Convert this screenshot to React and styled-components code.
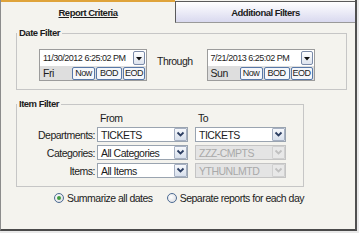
import styled, { createGlobalStyle } from "styled-components";

const GlobalStyle = createGlobalStyle`
  body {
    margin: 0;
    background: #e9e9e9;
    font-family: "Liberation Sans", Arial, sans-serif;
  }
`;

const Frame = styled.div`
  width: 354px;
  height: 229px;
  border-left: 1px solid #8c8c8c;
  border-right: 2px solid #505050;
  border-bottom: 2px solid #4a4a4a;
  background: #f4f3ee;
  color: #1c1c1c;
  font-size: 10.5px;
  letter-spacing: -0.5px;
`;

const TabBar = styled.div`
  display: flex;
  height: 23px;
`;

const ActiveTab = styled.div`
  align-items: center;
  border-top: 2px solid #dfa33a;
  box-sizing: border-box;
  display: flex;
  font-size: 9.5px;
  font-weight: bold;
  justify-content: center;
  text-decoration: underline;
  width: 174px;
`;

const InactiveTab = styled.div`
  align-items: center;
  background: linear-gradient(#ffffff, #d9d9ef);
  border: 1px solid #5a5a5a;
  border-bottom-color: #9a9a9a;
  border-right: none;
  box-sizing: border-box;
  display: flex;
  flex: 1;
  font-size: 9.5px;
  font-weight: bold;
  height: 22px;
  justify-content: center;
  margin-top: 1px;
`;

const Body = styled.div`
  padding: 4px 0 0 15px;
`;

const Group = styled.fieldset`
  border: 1px solid #c6c6c6;
  box-sizing: border-box;
  margin: ${props => props.$top}px 0 0 0;
  padding: 0;
  width: ${props => props.$width}px;
`;

const Legend = styled.legend`
  font-size: 9.5px;
  font-weight: bold;
  line-height: 12px;
  padding: 0 2px;
`;

const DateRow = styled.div`
  align-items: center;
  display: flex;
  padding: 10px 0 8px 22px;
`;

const DateBox = styled.div`
  background: #dedede;
  border: 1px solid #9c9c9c;
  box-sizing: border-box;
  display: flex;
  flex-direction: column;
  height: 32px;
  width: 108px;
`;

const DateInput = styled.div`
  align-items: center;
  background: #fff;
  display: flex;
  font-size: 9px;
  height: 16px;
  justify-content: space-between;
  padding-left: 3px;
`;

const DropBtn = styled.div`
  align-items: center;
  background: linear-gradient(#ffffff, #dde3ee);
  border: 1px solid #7a8aa8;
  border-radius: 2px;
  display: flex;
  height: 12px;
  justify-content: center;
  margin-right: 1px;
  width: 10px;
`;

const DateFoot = styled.div`
  align-items: center;
  display: flex;
  flex: 1;
  gap: 1px;
  padding: 0 1px 0 3px;
`;

const DayName = styled.span`
  flex: 1;
`;

const SmallBtn = styled.div`
  align-items: center;
  background: #f5f7fb;
  border: 1px solid #5878a8;
  border-radius: 2px;
  box-sizing: border-box;
  display: flex;
  font-size: 9px;
  height: 13px;
  justify-content: center;
  width: ${props => props.$w}px;
`;

const Through = styled.span`
  margin: 0 14px 9px 10px;
`;

const ItemTable = styled.div`
  display: flex;
  flex-direction: column;
  padding: 2px 0 8px 0;
`;

const Row = styled.div`
  align-items: center;
  display: grid;
  grid-template-columns: 80px 98px 91px;
  height: ${props => props.$h}px;

  & + & {
    margin-top: ${props => props.$gap}px;
  }
`;

const ColHead = styled.span`
  padding-left: 3px;
`;

const Label = styled.span`
  padding-right: 2px;
  text-align: right;
`;

const SelectBox = styled.div`
  align-items: center;
  background: ${props => (props.$disabled ? "#e4e4e4" : "#fff")};
  border: 1px solid ${props => (props.$disabled ? "#c4c4c4" : "#9aa4b0")};
  box-sizing: border-box;
  color: ${props => (props.$disabled ? "#a9a9a9" : "#1c1c1c")};
  display: flex;
  height: 15px;
  justify-content: space-between;
  padding-left: 3px;
  width: 91px;
`;

const Chevron = styled.div`
  align-items: center;
  background: ${props => (props.$disabled ? "#e8e8e8" : "linear-gradient(#f6f8fc, #d8e0ec)")};
  border: 1px solid ${props => (props.$disabled ? "#d0d0d0" : "#a6b0c2")};
  border-radius: 1px;
  box-sizing: border-box;
  display: flex;
  height: 13px;
  justify-content: center;
  width: 13px;
`;

const RadioRow = styled.div`
  align-items: center;
  display: flex;
  line-height: 12px;
  margin-top: 5px;
  padding-left: 38px;
`;

const Radio = styled.span`
  background: radial-gradient(circle at 40% 40%, #ffffff, #d6d8de);
  border: 1px solid #4d6b93;
  border-radius: 50%;
  box-sizing: border-box;
  height: 10px;
  margin-right: 3px;
  position: relative;
  width: 10px;

  &::after {
    background: #3f9b3f;
    border-radius: 50%;
    content: "";
    display: ${props => (props.$checked ? "block" : "none")};
    height: 4px;
    left: 2px;
    position: absolute;
    top: 2px;
    width: 4px;
  }
`;

const RadioText = styled.span`
  margin-right: ${props => props.$gap || 0}px;
`;

function DateCombo({ value, day }) {
  return (
    <DateBox>
      <DateInput>
        {value}
        <DropBtn>
          <svg width="6" height="5" viewBox="0 0 6 5">
            <polygon points="0,1 6,1 3,4.5" fill="#111" />
          </svg>
        </DropBtn>
      </DateInput>
      <DateFoot>
        <DayName>{day}</DayName>
        <SmallBtn $w={23}>Now</SmallBtn>
        <SmallBtn $w={26}>BOD</SmallBtn>
        <SmallBtn $w={22}>EOD</SmallBtn>
      </DateFoot>
    </DateBox>
  );
}

function Select({ value, disabled }) {
  return (
    <SelectBox $disabled={disabled}>
      {value}
      <Chevron $disabled={disabled}>
        <svg width="9" height="7" viewBox="0 0 9 7">
          <polyline
            points="1.5,1.5 4.5,4.5 7.5,1.5"
            fill="none"
            stroke={disabled ? "#c0c0c0" : "#2c3e62"}
            strokeWidth="1.8"
          />
        </svg>
      </Chevron>
    </SelectBox>
  );
}

export default function App() {
  return (
    <>
      <GlobalStyle />
      <Frame>
        <TabBar>
          <ActiveTab>Report Criteria</ActiveTab>
          <InactiveTab>Additional Filters</InactiveTab>
        </TabBar>
        <Body>
          <Group $width={331} $top={0}>
            <Legend>Date Filter</Legend>
            <DateRow>
              <DateCombo value="11/30/2012 6:25:02 PM" day="Fri" />
              <Through>Through</Through>
              <DateCombo value="7/21/2013 6:25:02 PM" day="Sun" />
            </DateRow>
          </Group>
          <Group $width={288} $top={8}>
            <Legend>Item Filter</Legend>
            <ItemTable>
              <Row $h={12} $gap={0}>
                <span />
                <ColHead>From</ColHead>
                <ColHead>To</ColHead>
              </Row>
              <Row $h={15} $gap={0}>
                <Label>Departments:</Label>
                <Select value="TICKETS" />
                <Select value="TICKETS" />
              </Row>
              <Row $h={15} $gap={3}>
                <Label>Categories:</Label>
                <Select value="All Categories" />
                <Select value="ZZZ-CMPTS" disabled />
              </Row>
              <Row $h={15} $gap={3}>
                <Label>Items:</Label>
                <Select value="All Items" />
                <Select value="YTHUNLMTD" disabled />
              </Row>
            </ItemTable>
          </Group>
          <RadioRow>
            <Radio $checked />
            <RadioText $gap={14}>Summarize all dates</RadioText>
            <Radio />
            <RadioText>Separate reports for each day</RadioText>
          </RadioRow>
        </Body>
      </Frame>
    </>
  );
}
